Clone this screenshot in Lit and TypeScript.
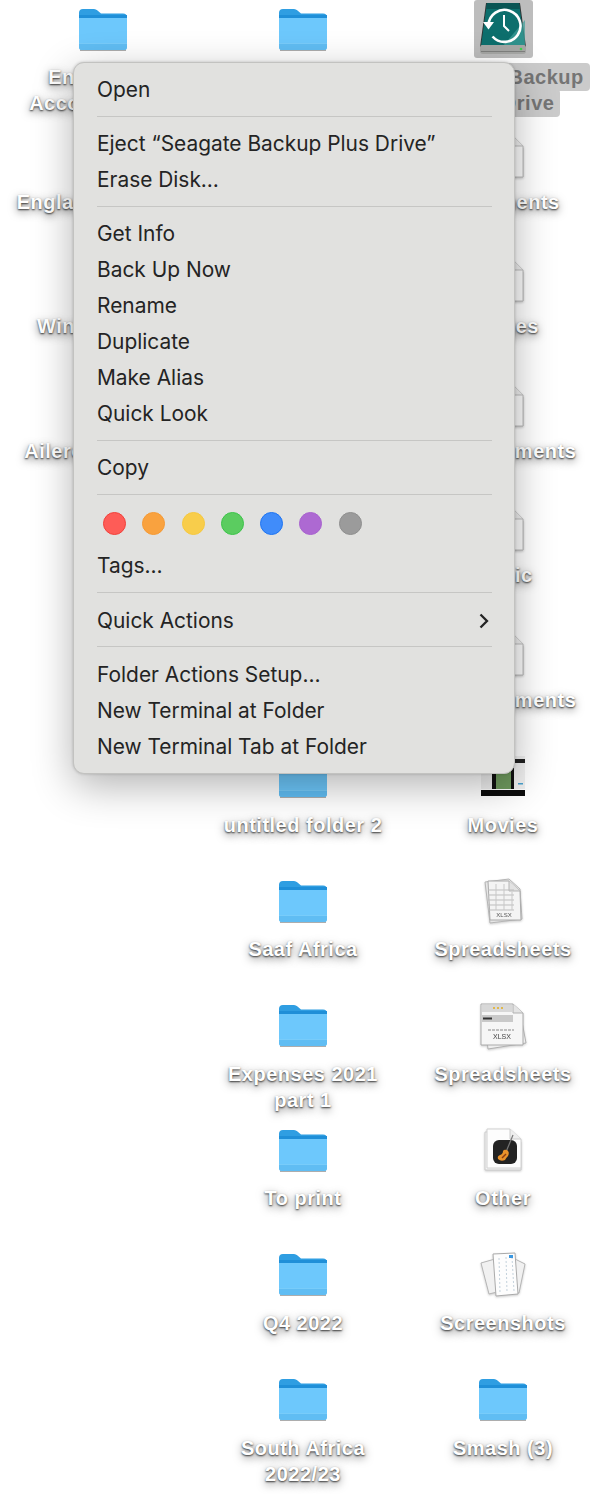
import { LitElement, css, html, svg } from "lit";
import { customElement } from "lit/decorators.js";

const folderIcon = () => html`<svg width="50" height="45" viewBox="0 0 50 45">
  <path d="M2 44h46v-3H2z" fill="#8a8a8a" opacity=".7"/>
  <path d="M1 6q0-4 4-4h11q2 0 3.500 1.500L23 6.500h22q4 0 4 4V14H1z" fill="#2f9ee2"/>
  <path d="M1 11q0-3 3-3h42q3 0 3 3v29q0 3-3 3H4q-3 0-3-3z" fill="#6dc8fc"/>
  <path d="M1 8h48v3H1z" fill="#1f8fd8"/>
  <path d="M1 36h48v4q0 3-3 3H4q-3 0-3-3z" fill="#60bdf3"/>
  <path d="M1 36h48v1H1z" fill="#78ccfa"/>
</svg>`;

const driveIcon = () => html`<svg width="50" height="54" viewBox="0 0 50 54">
  <path d="M8 1h34l6 44H2z" fill="#2f3333"/>
  <path d="M9 1h32l6 43H3z" fill="#0d6f6d"/>
  <path d="M9 1h32l1 6H8z" fill="#0a5554"/>
  <path d="M25 44 47 18v26z" fill="#3f9f9a" opacity=".7"/>
  <path d="M4 43h42q2 0 2 3v3q0 3-3 3H5q-3 0-3-3v-3q0-3 2-3z" fill="#a6a7a5"/>
  <path d="M3 49h44v1H3z" fill="#7f807e"/>
  <circle cx="43" cy="47" r="1.300" fill="#3fd14b"/>
  <path d="M10.500 23a16 16 0 1 1 4 11.500" fill="none" stroke="#fff" stroke-width="2.600"/>
  <path d="M5 20h11l-5.500 7.500z" fill="#fff"/>
  <path d="M26 13v11l5 5" fill="none" stroke="#fff" stroke-width="2"/>
</svg>`;

const sheetRows = [12, 17, 22, 27, 32].map(
  (y) => svg`<path d=${`M8 ${y}h26`} stroke="#bdbdbd" stroke-width="1"/>`
);

const docIcon = () => html`<svg class="doc" width="46" height="54" viewBox="0 0 46 54">
  <path d="M6 12h28l9 9v29l-35 2z" fill="#f4f4f4" stroke="#c4c4c4"/>
  <path d="M9 10h25l9 9v31H9z" fill="#fbfbfb" stroke="#bdbdbd"/>
  <path d="M34 10v9h9" fill="#eee" stroke="#bdbdbd"/>
</svg>`;

const xlsxIcon = () => html`<svg class="doc" width="46" height="46" viewBox="0 0 46 46">
  <path d="M5 4 29 1l11 10 2 30-32 4z" fill="#e6e6e6" stroke="#b5b5b5"/>
  <path d="M8 3h21l11 10 1 29H10z" fill="#f4f4f4" stroke="#aaa"/>
  <path d="M29 3v10h11" fill="#e2e2e2" stroke="#b5b5b5"/>
  ${sheetRows}
  <path d="M16 6v26M24 6v26M32 14v18" stroke="#c8c8c8"/>
  <text x="24" y="39" font-size="6" font-family="Liberation Sans, sans-serif" text-anchor="middle" fill="#555">XLSX</text>
</svg>`;

const calendarIcon = () => html`<svg class="doc" width="50" height="50" viewBox="0 0 50 50">
  <path d="M6 14 42 10l6 32-38 6z" fill="#eee" stroke="#b0b0b0"/>
  <path d="M3 3h32l10 9v32H3z" fill="#f6f6f6" stroke="#aaa"/>
  <path d="M35 3v9h10" fill="#e4e4e4" stroke="#b0b0b0"/>
  <path d="M4 4h30v7H4z" fill="#d8d8d8"/>
  <path d="M15 7h12" stroke="#e0b84c" stroke-dasharray="2 2" stroke-width="2"/>
  <path d="M4 14h31v7H4z" fill="#c9c9c9"/>
  <path d="M5 17.500h9" stroke="#333" stroke-width="2"/>
  <path d="M10 29h26" stroke="#888" stroke-dasharray="3 1"/>
  <text x="24" y="38" font-size="7" font-family="Liberation Sans, sans-serif" text-anchor="middle" fill="#444">XLSX</text>
</svg>`;

const guitarIcon = () => html`<svg class="doc" width="46" height="46" viewBox="0 0 46 46">
  <path d="M5 5h25l11 10v28H5z" fill="#f2f2f2" stroke="#ccc"/>
  <path d="M7 2h23l11 10v29H7z" fill="#fdfdfd" stroke="#d2d2d2"/>
  <path d="M30 2v10h11" fill="#eee" stroke="#ccc"/>
  <rect x="13" y="13" width="24" height="24" rx="6" fill="#232323"/>
  <path d="M33 8 26 25" stroke="#777" stroke-width="1.200"/>
  <path d="M27 23q3 2 1 6-2 2-3 4-4 2-7-1-1-3 2-4 3-1 3-4 1-2 4-1z" fill="#e9922a"/>
  <path d="M22 31l4-4" stroke="#8a3d12" stroke-width="1.500"/>
</svg>`;

const pagesIcon = () => html`<svg class="doc" width="48" height="46" viewBox="0 0 48 46">
  <path d="M2 11 16 7l6 32-12 3z" fill="#f1f1f1" stroke="#b5b5b5"/>
  <path d="M46 12 34 6l-6 32 12 3z" fill="#f1f1f1" stroke="#b5b5b5"/>
  <path d="M14 2 36 1l3 41-22 2z" fill="#fdfdfd" stroke="#aaa"/>
  <path d="M20 6l1 34M27 5l1 35M33 5l2 34" stroke="#c4d2dc" stroke-dasharray="2 2"/>
  <rect x="30" y="3" width="4" height="3" fill="#3b97e0"/>
</svg>`;

const movieIcon = () => html`<svg width="46" height="41" viewBox="0 0 46 41">
  <path d="M1 0h44v34H1z" fill="#f0f0f0"/>
  <path d="M34 3h11v4H34z" fill="#222"/>
  <path d="M12 8h22v26H12z" fill="#111"/>
  <path d="M16 15h15v19H16z" fill="#6f9a5e"/>
  <path d="M38 27h5v1.500h-5z" fill="#4aa3d0"/>
  <path d="M1 34h44v6H1z" fill="#0c0c0c"/>
  <path d="M1 33h44v1H1z" fill="#fff"/>
</svg>`;

type Item = { label?: string; icon?: () => unknown; selected?: boolean };

const rows: Item[][] = [
  [{ label: "English Q2\nAccounts 2021", icon: folderIcon }, { icon: folderIcon }, { label: "Seagate Backup\nPlus Drive", icon: driveIcon, selected: true }],
  [{ label: "England Invoices" }, {}, { label: "Documents", icon: docIcon }],
  [{ label: "Winter Travel" }, {}, { label: "Images", icon: docIcon }],
  [{ label: "Ailerons Report" }, {}, { label: "All Documents", icon: docIcon }],
  [{}, {}, { label: "Music", icon: docIcon }],
  [{}, {}, { label: "All Documents", icon: docIcon }],
  [{}, { label: "untitled folder 2", icon: folderIcon }, { label: "Movies", icon: movieIcon }],
  [{}, { label: "Saaf Africa", icon: folderIcon }, { label: "Spreadsheets", icon: xlsxIcon }],
  [{}, { label: "Expenses 2021\npart 1", icon: folderIcon }, { label: "Spreadsheets", icon: calendarIcon }],
  [{}, { label: "To print", icon: folderIcon }, { label: "Other", icon: guitarIcon }],
  [{}, { label: "Q4 2022", icon: folderIcon }, { label: "Screenshots", icon: pagesIcon }],
  [{}, { label: "South Africa\n2022/23", icon: folderIcon }, { label: "Smash (3)", icon: folderIcon }],
];

const menuGroups = [
  ["Open"],
  ["Eject “Seagate Backup Plus Drive”", "Erase Disk…"],
  ["Get Info", "Back Up Now", "Rename", "Duplicate", "Make Alias", "Quick Look"],
  ["Copy"],
];

const tagColors = [
  ["#fe5c57", "#f2403a"],
  ["#f9a23f", "#f59a35"],
  ["#f8cd4b", "#f6c83f"],
  ["#5bcc60", "#3cc44a"],
  ["#408cfa", "#1e74f2"],
  ["#ad69d2", "#a862cf"],
  ["#9b9b9b", "#8f8f8f"],
];

@customElement("app-root")
export class AppRoot extends LitElement {
  static styles = css`
    :host {
      display: block;
      position: relative;
      width: 600px;
      height: 1503px;
      overflow: hidden;
      background: #fff;
    }

    .desktop {
      display: grid;
      grid-template-columns: repeat(3, 200px);
      grid-auto-rows: 124.6px;
      padding-left: 3px;
    }

    .cell {
      display: flex;
      flex-direction: column;
      align-items: center;
    }

    .icon {
      display: flex;
      align-items: center;
      justify-content: center;
      width: 59px;
      height: 58px;
      margin-bottom: 6px;
      border-radius: 3px;
      flex: none;
    }

    .selected .icon {
      background: #bdbdbd;
    }

    .doc {
      filter: drop-shadow(0 1px 1px rgba(0, 0, 0, 0.2));
    }

    .label {
      font: 700 20px/26px "Liberation Sans", sans-serif;
      letter-spacing: 0.5px;
      color: #fff;
      text-align: center;
      white-space: pre;
      text-shadow: 0 1px 2px rgba(0, 0, 0, 0.75), 0 3px 9px rgba(0, 0, 0, 0.5);
    }

    .selected .label span {
      color: #757575;
      text-shadow: none;
      background: #cbcbcb;
      padding: 3px 6px;
      border-radius: 4px;
      -webkit-box-decoration-break: clone;
      box-decoration-break: clone;
    }

    .menu {
      position: absolute;
      left: 73px;
      top: 62px;
      width: 442px;
      box-sizing: border-box;
      padding: 9px 0 8px;
      background: #e1e1df;
      border: 1px solid #c2c2c0;
      border-radius: 11px;
      box-shadow: 0 12px 40px rgba(0, 0, 0, 0.3), 0 0 3px rgba(0, 0, 0, 0.2);
      font: 400 20.900px/36px Inter, sans-serif;
      color: #242424;
    }

    .item {
      display: flex;
      justify-content: space-between;
      align-items: center;
      height: 36px;
      padding: 0 24px 0 23px;
      white-space: nowrap;
    }

    .sep {
      height: 1px;
      margin: 8px 22px 9px 23px;
      background: #c6c6c4;
    }

    .sep.before-sub {
      margin-bottom: 10px;
    }

    .sep.after-sub {
      margin: 7px 22px 10px 23px;
    }

    .tags {
      display: flex;
      gap: 16.300px;
      height: 44px;
      padding: 8px 0 0 29px;
      box-sizing: border-box;
    }

    .tag {
      width: 23px;
      height: 23px;
      box-sizing: border-box;
      border-radius: 50%;
      border: 1.500px solid;
    }
  `;

  render() {
    return html`
      <div class="desktop">
        ${rows.flat().map(
          (it) => html`<div class="cell ${it.selected ? "selected" : ""}">
            <div class="icon">${it.icon?.()}</div>
            ${it.label ? html`<div class="label"><span>${it.label}</span></div>` : ""}
          </div>`
        )}
      </div>
      <div class="menu">
        ${menuGroups.map(
          (group) => html`${group.map((t) => html`<div class="item">${t}</div>`)}<div class="sep"></div>`
        )}
        <div class="tags">
          ${tagColors.map(
            ([fill, line]) => html`<div class="tag" style="background:${fill};border-color:${line}"></div>`
          )}
        </div>
        <div class="item">Tags…</div>
        <div class="sep before-sub"></div>
        <div class="item">
          Quick Actions
          <svg width="12" height="16" viewBox="0 0 12 16">
            <path d="M2.500 1.500 9 8l-6.500 6.500" fill="none" stroke="#242424" stroke-width="2.300"/>
          </svg>
        </div>
        <div class="sep after-sub"></div>
        <div class="item">Folder Actions Setup…</div>
        <div class="item">New Terminal at Folder</div>
        <div class="item">New Terminal Tab at Folder</div>
      </div>
    `;
  }
}
